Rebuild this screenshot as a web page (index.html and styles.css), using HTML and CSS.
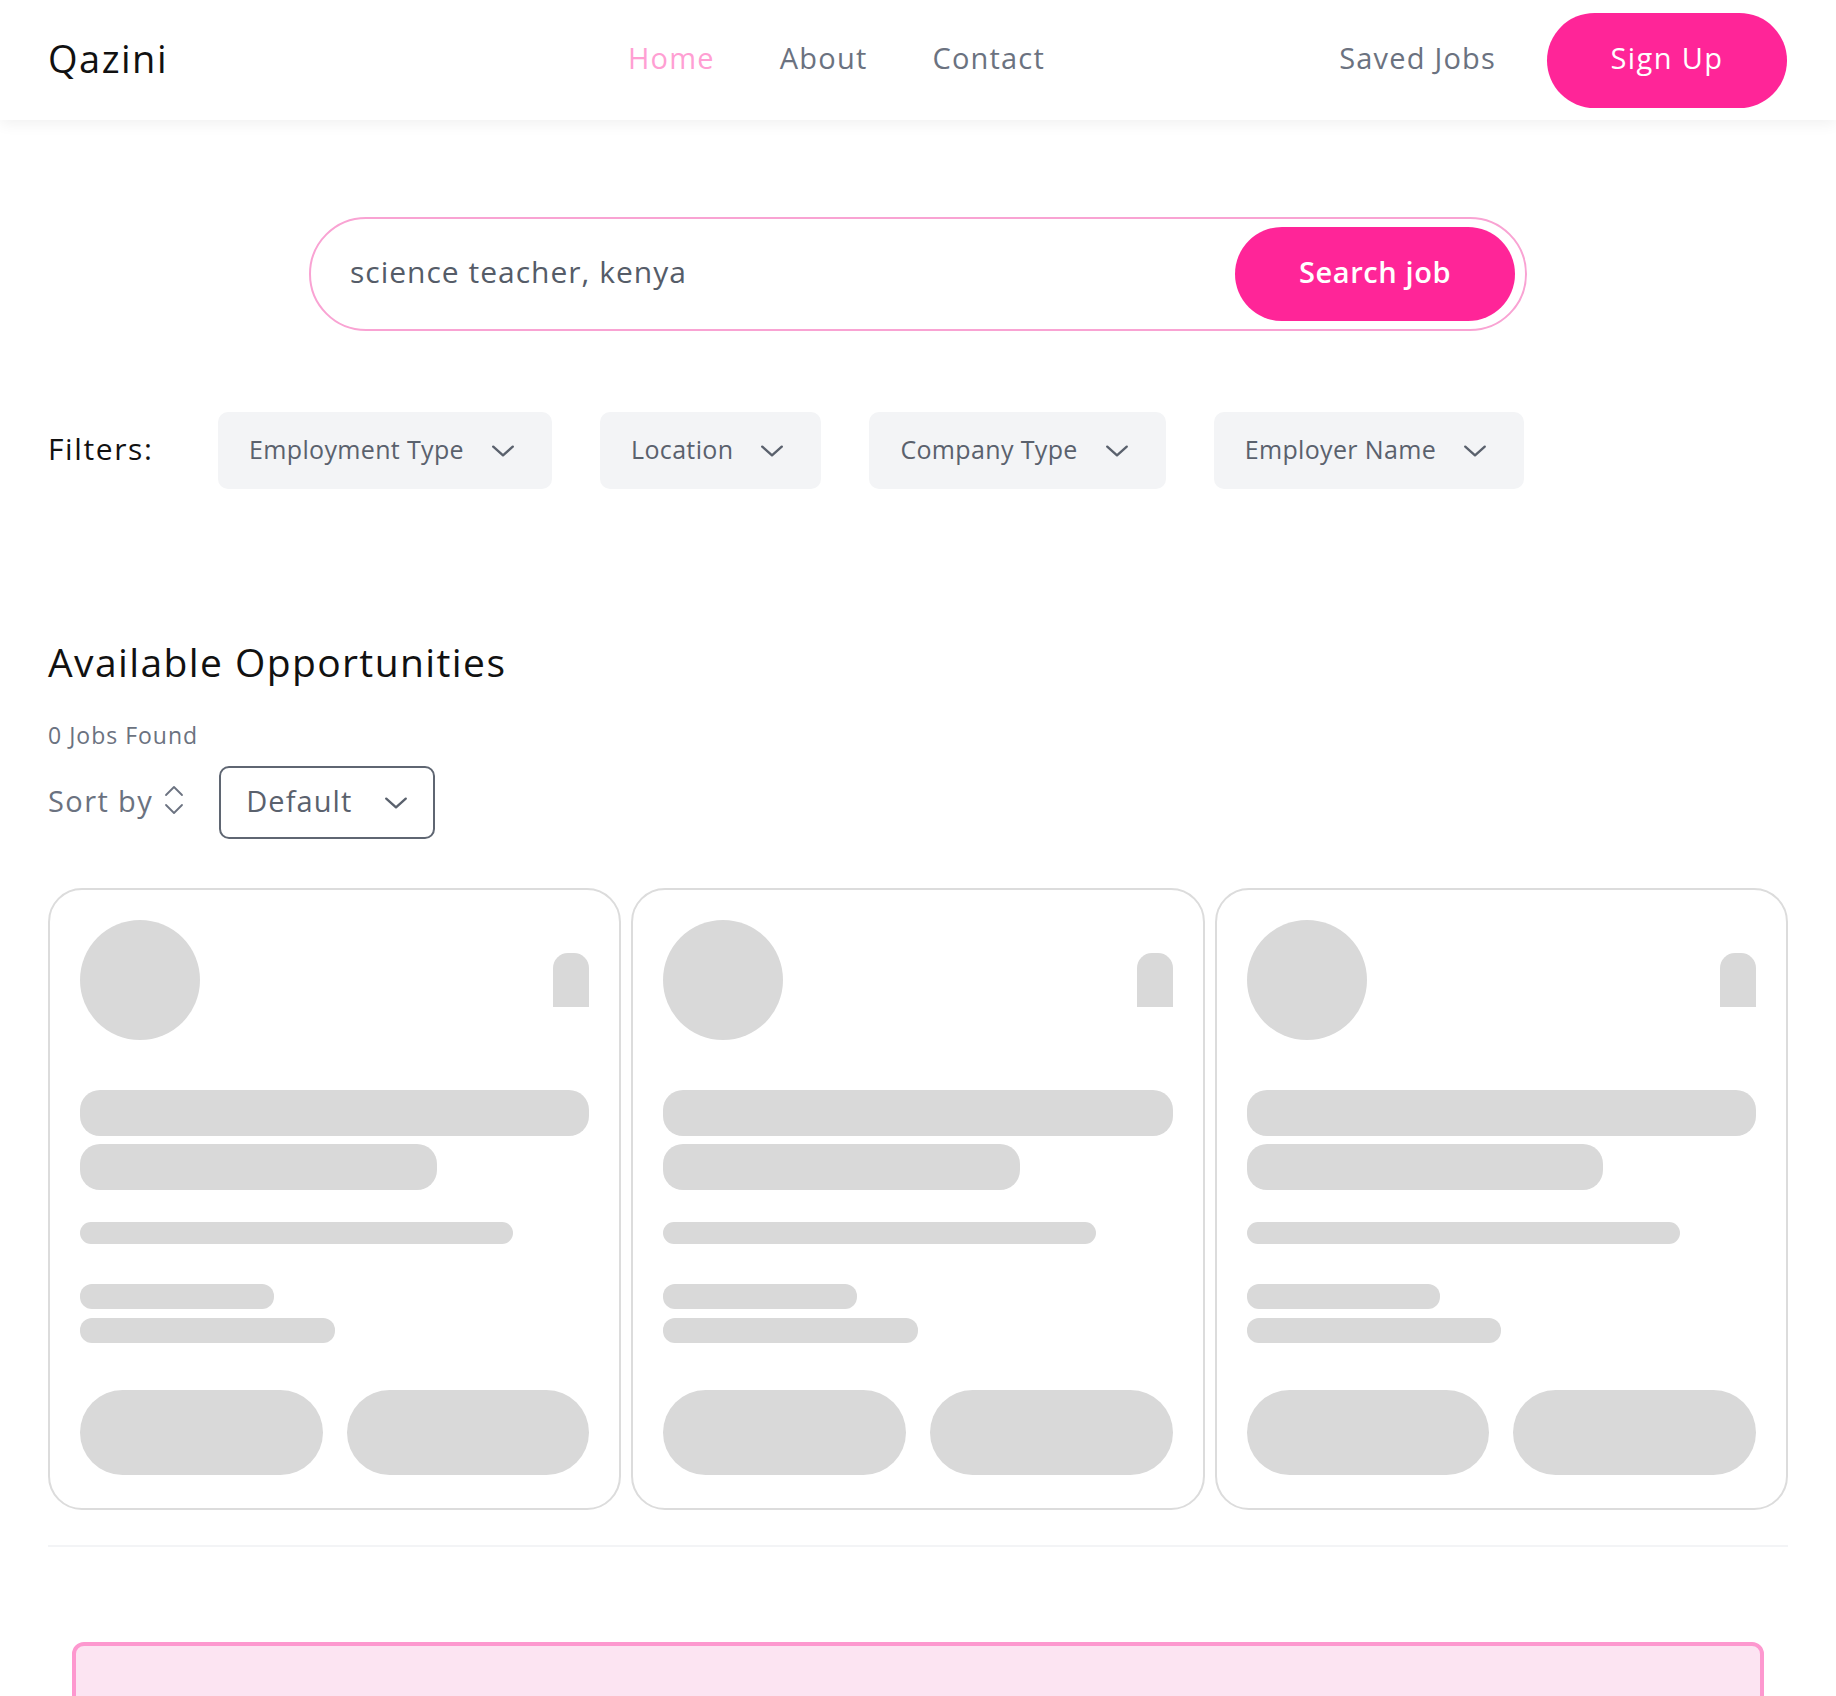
FILE: index.html
```html
<!DOCTYPE html>
<html lang="en">
<head>
<meta charset="utf-8">
<title>Qazini</title>
<link rel="stylesheet" href="styles.css">
</head>
<body>
<header class="topbar">
  <div class="logo">Qazini</div>
  <nav class="nav">
    <a class="nav-link active" href="#">Home</a>
    <a class="nav-link" href="#">About</a>
    <a class="nav-link" href="#">Contact</a>
  </nav>
  <div class="nav-right">
    <a class="nav-link" href="#">Saved Jobs</a>
    <button class="btn-signup">Sign Up</button>
  </div>
</header>

<main class="main">
  <form class="search">
    <input class="search-input" type="text" value="science teacher, kenya">
    <button class="search-btn" type="button">Search job</button>
  </form>

  <div class="filters">
    <span class="filters-label">Filters:</span>
    <div class="filter"><span>Employment Type</span><svg class="chev" viewBox="0 0 24 24"><polyline points="3 8 12 16 21 8"/></svg></div>
    <div class="filter"><span>Location</span><svg class="chev" viewBox="0 0 24 24"><polyline points="3 8 12 16 21 8"/></svg></div>
    <div class="filter"><span>Company Type</span><svg class="chev" viewBox="0 0 24 24"><polyline points="3 8 12 16 21 8"/></svg></div>
    <div class="filter"><span>Employer Name</span><svg class="chev" viewBox="0 0 24 24"><polyline points="3 8 12 16 21 8"/></svg></div>
  </div>

  <section class="results">
    <h2 class="results-title">Available Opportunities</h2>
    <p class="results-count">0 Jobs Found</p>
    <div class="sort-row">
      <span class="sort-label">Sort by
        <svg class="sort-icon" viewBox="0 0 22 32"><path d="M3 21l8 8 8-8M3 11l8-8 8 8"/></svg>
      </span>
      <div class="select"><span>Default</span><svg class="chev" viewBox="0 0 24 24"><polyline points="3 8 12 16 21 8"/></svg></div>
    </div>

    <div class="cards">
      <div class="card">
        <div class="card-head"><div class="sk-avatar"></div><div class="sk-bookmark"></div></div>
        <div class="sk sk-title w100"></div>
        <div class="sk sk-title w70"></div>
        <div class="sk sk-line w85"></div>
        <div class="sk sk-small w38"></div>
        <div class="sk sk-small w50 tight"></div>
        <div class="card-actions"><div class="sk-btn"></div><div class="sk-btn"></div></div>
      </div>
      <div class="card">
        <div class="card-head"><div class="sk-avatar"></div><div class="sk-bookmark"></div></div>
        <div class="sk sk-title w100"></div>
        <div class="sk sk-title w70"></div>
        <div class="sk sk-line w85"></div>
        <div class="sk sk-small w38"></div>
        <div class="sk sk-small w50 tight"></div>
        <div class="card-actions"><div class="sk-btn"></div><div class="sk-btn"></div></div>
      </div>
      <div class="card">
        <div class="card-head"><div class="sk-avatar"></div><div class="sk-bookmark"></div></div>
        <div class="sk sk-title w100"></div>
        <div class="sk sk-title w70"></div>
        <div class="sk sk-line w85"></div>
        <div class="sk sk-small w38"></div>
        <div class="sk sk-small w50 tight"></div>
        <div class="card-actions"><div class="sk-btn"></div><div class="sk-btn"></div></div>
      </div>
    </div>
  </section>

  <hr class="divider">

  <div class="promo"></div>
</main>
</body>
</html>
```

FILE: styles.css
```css
* { box-sizing: border-box; }

body {
  margin: 0;
  background: #ffffff;
  font-family: "Open Sans", "Noto Sans", sans-serif;
  color: #111111;
}

a { text-decoration: none; }

.topbar {
  height: 120px;
  padding: 0 49px 0 48px;
  display: flex;
  align-items: center;
  background: #ffffff;
  box-shadow: 0 4px 14px rgba(0, 0, 0, 0.06);
  position: relative;
  z-index: 1;
}

.logo {
  width: 170px;
  font-size: 38px;
  letter-spacing: 1.5px;
  color: #111111;
  margin-bottom: 5px;
}

.nav {
  display: flex;
  gap: 65px;
  margin-left: 410px;
  margin-bottom: 5px;
}

.nav-link {
  font-size: 29px;
  letter-spacing: 1.2px;
  color: #6b7280;
}

.nav-link.active { color: #ff9fd3; }

.nav-right {
  margin-left: auto;
  display: flex;
  align-items: center;
  gap: 51px;
}

.nav-right .nav-link { margin-bottom: 5px; }

.btn-signup {
  width: 240px;
  height: 95px;
  border: none;
  border-radius: 48px;
  background: #ff2598;
  color: #ffffff;
  font-family: inherit;
  font-size: 29px;
  letter-spacing: 1.4px;
  padding: 0 0 5px;
}

.main {
  padding: 0 48px 0 48px;
}

.search {
  width: 1218px;
  height: 114px;
  margin: 97px auto 0;
  border: 2px solid #f9a3d3;
  border-radius: 57px;
  display: flex;
  align-items: center;
  padding: 0 10px 0 33px;
}

.search-input {
  flex: 1;
  border: none;
  outline: none;
  font-family: inherit;
  font-size: 30px;
  letter-spacing: 1px;
  color: #555c68;
  background: transparent;
  padding: 0 6px 5px;
}

.search-btn {
  width: 280px;
  height: 94px;
  border: none;
  border-radius: 47px;
  background: #ff2598;
  color: #ffffff;
  font-family: inherit;
  font-size: 29px;
  font-weight: 600;
  letter-spacing: 0.6px;
  padding: 0 0 5px;
}

.filters {
  margin-top: 81px;
  display: flex;
  align-items: center;
  gap: 48px;
}

.filters-label {
  width: 122px;
  font-size: 30px;
  letter-spacing: 1.6px;
  color: #111111;
  padding-bottom: 4px;
}

.filter {
  height: 77px;
  background: #f3f4f6;
  border-radius: 10px;
  display: flex;
  align-items: center;
  gap: 26px;
  padding: 0 36px 0 31px;
  font-size: 25px;
  letter-spacing: 0.35px;
  color: #5a616d;
}

.filter span { padding-bottom: 4px; }

.chev {
  width: 26px;
  height: 26px;
  fill: none;
  stroke: #5a616d;
  stroke-width: 2.2;
  stroke-linecap: round;
  stroke-linejoin: round;
}

.results { margin-top: 146px; }

.results-title {
  margin: 0;
  font-size: 39px;
  font-weight: 500;
  letter-spacing: 1.4px;
  color: #111111;
}

.results-count {
  margin: 31px 0 0;
  font-size: 23px;
  letter-spacing: 1px;
  color: #6b7280;
}

.sort-row {
  margin-top: 15px;
  display: flex;
  align-items: center;
  gap: 34px;
}

.sort-label {
  display: flex;
  align-items: center;
  gap: 10px;
  font-size: 29px;
  letter-spacing: 1.4px;
  color: #6b7280;
  margin-bottom: 5px;
}

.sort-icon {
  width: 22px;
  height: 32px;
  fill: none;
  stroke: #6b7280;
  stroke-width: 1.8;
  stroke-linecap: round;
  stroke-linejoin: round;
}

.select {
  width: 216px;
  height: 73px;
  border: 2px solid #5f6672;
  border-radius: 10px;
  display: flex;
  align-items: center;
  justify-content: space-between;
  padding: 0 24px 0 25px;
  font-size: 29px;
  letter-spacing: 1.1px;
  color: #5a616d;
}

.select span { padding-bottom: 4px; }

.cards {
  margin-top: 49px;
  display: grid;
  grid-template-columns: repeat(3, 1fr);
  gap: 10px;
}

.card {
  border: 2px solid #dcdcdc;
  border-radius: 34px;
  padding: 30px 30px 33px;
  display: flex;
  flex-direction: column;
}

.card-head {
  display: flex;
  justify-content: space-between;
  align-items: center;
}

.sk-avatar {
  width: 120px;
  height: 120px;
  border-radius: 50%;
  background: #d9d9d9;
}

.sk-bookmark {
  width: 36px;
  height: 54px;
  background: #d9d9d9;
  border-radius: 15px 15px 0 0;
}

.sk { background: #d9d9d9; }

.sk-title {
  height: 46px;
  border-radius: 20px;
  margin-top: 8px;
}

.card-head + .sk-title { margin-top: 50px; }

.sk-line {
  height: 22px;
  border-radius: 11px;
  margin-top: 32px;
}

.sk-small {
  height: 25px;
  border-radius: 12px;
  margin-top: 40px;
}

.sk-small.tight { margin-top: 9px; }

.w100 { width: 100%; }
.w85 { width: 85%; }
.w70 { width: 70%; }
.w50 { width: 50%; }
.w38 { width: 38%; }

.card-actions {
  margin-top: 47px;
  display: flex;
  gap: 24px;
}

.sk-btn {
  flex: 1;
  height: 85px;
  border-radius: 43px;
  background: #d9d9d9;
}

.divider {
  margin: 35px 0 0;
  border: none;
  height: 2px;
  background: #f3f4f6;
}

.promo {
  margin: 95px 24px 0;
  height: 240px;
  background: #fce4f2;
  border: 4px solid #fd98cf;
  border-radius: 12px;
}
```
